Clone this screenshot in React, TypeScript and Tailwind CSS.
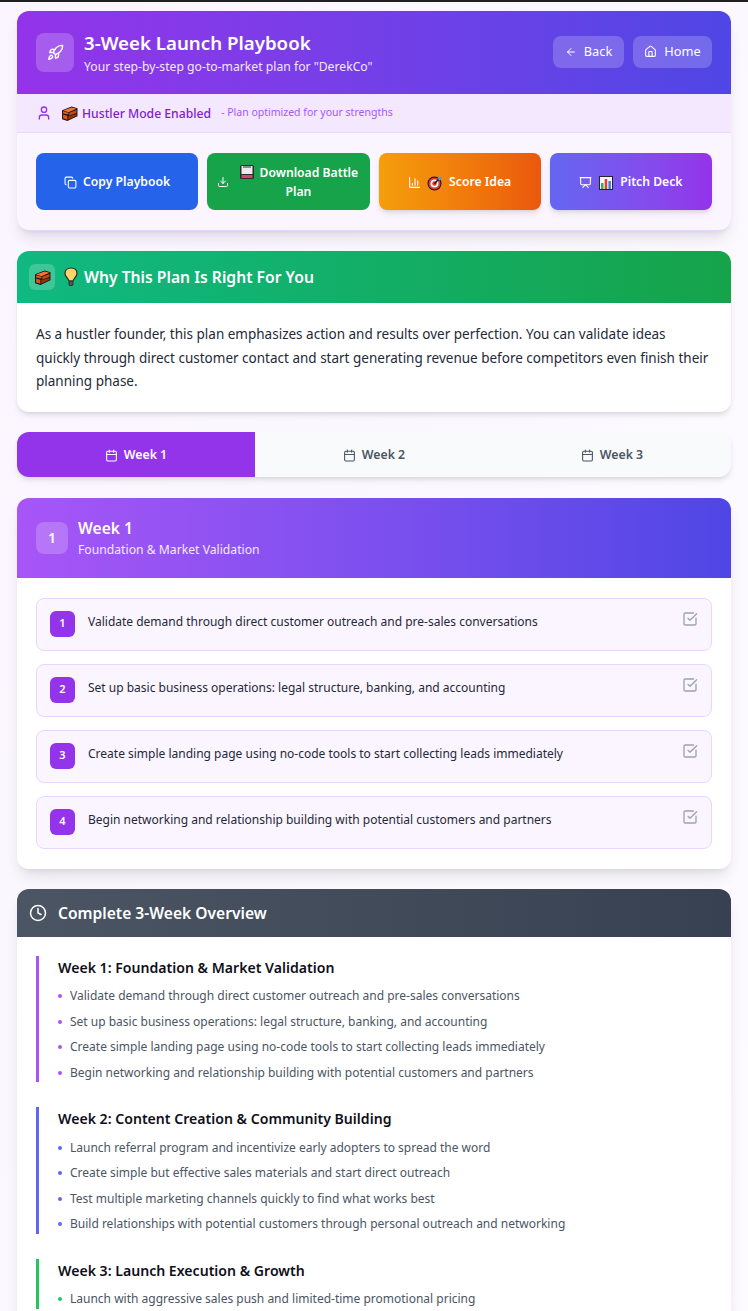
import React from 'react';
import { ArrowLeft, BarChart3, Calendar, CheckSquare, Clock, Copy, Download, Home, Presentation, Rocket, User } from 'lucide-react';

const BrickEmoji = ({ size = 17 }: { size?: number }) => (
  <svg width={size} height={size} viewBox="0 0 16 16" className="shrink-0">
    <path d="M1 5 L10 1.5 L15.5 3 L15.5 10.5 L6 15 L1 13.5 Z" fill="#1f1410" />
    <path d="M2 5.2 L10 2.4 L14.6 3.6 L7 6.8 Z" fill="#f0763a" />
    <path d="M2 5.8 L7 7.4 L7 9 L2 8 Z" fill="#d9601f" />
    <path d="M7.8 7.2 L14.6 4.6 L14.6 7.6 L7.8 9.8 Z" fill="#c24a1a" />
    <path d="M2 9 L6 10 L6 13.8 L2 12.7 Z" fill="#d2591f" />
    <path d="M6.8 10.6 L14.6 8.4 L14.6 10 L6.8 13.8 Z" fill="#8f3513" />
  </svg>
);

const FloppyEmoji = () => (
  <svg width={16} height={16} viewBox="0 0 16 16" className="shrink-0">
    <rect x="1" y="1" width="14" height="14" rx="1.5" fill="#2b2b30" />
    <rect x="2.5" y="2" width="11" height="8" fill="#eceaea" />
    <rect x="4" y="2" width="8" height="2" fill="#8a8a90" />
    <rect x="2.5" y="11" width="11" height="3" fill="#d8436f" />
  </svg>
);

const TargetEmoji = () => (
  <svg width={16} height={16} viewBox="0 0 16 16" className="shrink-0">
    <circle cx="7.5" cy="8.5" r="7" fill="#1c1212" />
    <circle cx="7.5" cy="8.5" r="6" fill="#e23b2e" />
    <circle cx="7.5" cy="8.5" r="4" fill="#f5efe8" />
    <circle cx="7.5" cy="8.5" r="2.2" fill="#d8342a" />
    <path d="M7.5 8.5 L13 3" stroke="#1c1212" strokeWidth="1.4" />
    <path d="M10.5 3.5 L13 1 L15 3 L12.5 5.5 Z" fill="#3fa7e0" />
  </svg>
);

const ChartEmoji = () => (
  <svg width={16} height={16} viewBox="0 0 16 16" className="shrink-0">
    <rect x="1" y="1" width="14" height="14" fill="#25252b" />
    <rect x="2" y="2" width="12" height="12" fill="#f2f4f6" />
    <rect x="3" y="8" width="2.5" height="6" fill="#3db04a" />
    <rect x="6.7" y="4" width="2.5" height="10" fill="#e0403a" />
    <rect x="10.4" y="6" width="2.5" height="8" fill="#3f7fd8" />
  </svg>
);

const BulbEmoji = () => (
  <svg width={16} height={20} viewBox="0 0 16 20" className="shrink-0">
    <path d="M8 1 C3.5 1 2 4 2 6.5 C2 9.5 5 11 6 14 L10 14 C11 11 14 9.5 14 6.5 C14 4 12.5 1 8 1 Z" fill="#fbd56b" stroke="#2a2a20" strokeWidth="1.2" />
    <rect x="6" y="14" width="4" height="4.5" rx="1" fill="#55555a" stroke="#222" strokeWidth="0.8" />
  </svg>
);

const tasks = [
  'Validate demand through direct customer outreach and pre-sales conversations',
  'Set up basic business operations: legal structure, banking, and accounting',
  'Create simple landing page using no-code tools to start collecting leads immediately',
  'Begin networking and relationship building with potential customers and partners',
];

const week2 = [
  'Launch referral program and incentivize early adopters to spread the word',
  'Create simple but effective sales materials and start direct outreach',
  'Test multiple marketing channels quickly to find what works best',
  'Build relationships with potential customers through personal outreach and networking',
];

const OverviewWeek = ({ title, items, border, dot }: { title: string; items: string[]; border: string; dot: string }) => (
  <div className={`border-l-[3px] pl-[19px] pb-[1px] ${border}`}>
    <h4 className="text-[14.1px] leading-[24px] font-semibold text-[#0f0f1a]">{title}</h4>
    <ul className="mt-[8px] flex flex-col gap-[8.5px]">
      {items.map((item) => (
        <li key={item} className="flex items-center h-[17px] text-[12px] text-[#4b5563]">
          <span className={`w-[4px] h-[4px] rounded-full mr-[8px] shrink-0 ${dot}`}></span>
          {item}
        </li>
      ))}
    </ul>
  </div>
);

export default function App() {
  return (
    <div className="h-[1311px] overflow-hidden bg-gradient-to-br from-[#faf5ff] to-[#fdfbff] font-['Noto_Sans',sans-serif] text-[#111827]">
      <div className="h-[2px] bg-[#1f1f1f]"></div>
      <div className="px-[17px] pt-[9px] flex flex-col gap-[20px]">

        {/* Playbook header */}
        <section className="rounded-xl overflow-hidden shadow-lg bg-[#faf5ff] border-b border-[#e9d5ff]">
          <div className="h-[83px] px-[19px] flex items-center justify-between bg-gradient-to-r from-[#9333ea] to-[#4f46e5]">
            <div className="flex items-center gap-[10px]">
              <div className="w-[38px] h-[39px] rounded-lg bg-white/20 flex items-center justify-center">
                <Rocket className="w-[17px] h-[17px] text-white" />
              </div>
              <div>
                <h1 className="text-[18.7px] leading-[26px] font-semibold text-white">3-Week Launch Playbook</h1>
                <p className="mt-[2px] text-[12.2px] leading-[18px] text-[#f3e8ff]">Your step-by-step go-to-market plan for "DerekCo"</p>
              </div>
            </div>
            <div className="flex gap-[9px] mb-[2px]">
              <button className="h-[32px] w-[71px] rounded-lg bg-white/20 text-white text-[12.8px] flex items-center justify-center gap-[7px]">
                <ArrowLeft className="w-[12px] h-[12px]" /> Back
              </button>
              <button className="h-[32px] w-[79px] rounded-lg bg-white/20 text-white text-[12.8px] flex items-center justify-center gap-[7px]">
                <Home className="w-[13px] h-[13px]" /> Home
              </button>
            </div>
          </div>

          <div className="h-[39px] px-[19px] flex items-center bg-[#f3e8ff] border-b border-[#e9d5ff]">
            <User className="w-[16px] h-[16px] text-[#9333ea]" />
            <span className="ml-[9px]"><BrickEmoji /></span>
            <span className="ml-[4px] mt-[2px] text-[12.2px] font-medium text-[#7e22ce]">Hustler Mode Enabled</span>
            <span className="ml-[10px] text-[10.5px] text-[#a855f7]">- Plan optimized for your strengths</span>
          </div>

          <div className="px-[19px] pt-[20px] pb-[20px] grid grid-cols-4 gap-[9px]">
            <button className="h-[57px] pt-[2px] rounded-lg bg-[#2563eb] text-white text-[12.2px] font-semibold flex items-center justify-center gap-[6px]">
              <Copy className="w-[13px] h-[13px]" /> Copy Playbook
            </button>
            <button className="h-[57px] rounded-lg bg-[#16a34a] text-white text-[12.2px] leading-[19px] font-semibold flex items-center justify-center gap-[8px] px-[10px]">
              <Download className="w-[12px] h-[12px] shrink-0" />
              <span className="text-center"><span className="inline-block align-[-3px] mr-[5px]"><FloppyEmoji /></span>Download Battle Plan</span>
            </button>
            <button className="h-[57px] pt-[2px] rounded-lg bg-gradient-to-r from-[#f59e0b] to-[#ea580c] text-white text-[12.2px] font-semibold flex items-center justify-center gap-[6px] shadow-md">
              <BarChart3 className="w-[13px] h-[13px]" />
              <TargetEmoji /> Score Idea
            </button>
            <button className="h-[57px] pt-[2px] rounded-lg bg-gradient-to-r from-[#6366f1] to-[#9333ea] text-white text-[12.2px] font-semibold flex items-center justify-center gap-[6px] shadow-md">
              <Presentation className="w-[13px] h-[13px]" />
              <ChartEmoji /> Pitch Deck
            </button>
          </div>
        </section>

        {/* Why this plan */}
        <section className="rounded-xl overflow-hidden bg-white shadow-md">
          <div className="h-[52px] px-[12px] flex items-center bg-gradient-to-r from-[#10b981] to-[#16a34a]">
            <div className="w-[26px] h-[26px] rounded-md bg-white/20 flex items-center justify-center">
              <BrickEmoji />
            </div>
            <span className="ml-[8px]"><BulbEmoji /></span>
            <h2 className="ml-[5px] mt-[2px] text-[15.7px] font-semibold text-white">Why This Plan Is Right For You</h2>
          </div>
          <p className="px-[19px] pt-[20px] pb-[18px] text-[13.5px] leading-[23.5px] text-[#1f2937]">
            As a hustler founder, this plan emphasizes action and results over perfection. You can validate ideas quickly through direct customer contact and start generating revenue before competitors even finish their planning phase.
          </p>
        </section>

        {/* Week tabs */}
        <div className="h-[45px] rounded-xl overflow-hidden grid grid-cols-3 bg-[#f9fafb] shadow-md">
          <div className="pt-[2px] bg-[#9333ea] text-white text-[12.3px] font-semibold flex items-center justify-center gap-[6px]">
            <Calendar className="w-[13px] h-[13px]" /> Week 1
          </div>
          <div className="pt-[2px] text-[#4b5563] text-[12.3px] font-semibold flex items-center justify-center gap-[6px]">
            <Calendar className="w-[13px] h-[13px]" /> Week 2
          </div>
          <div className="pt-[2px] text-[#4b5563] text-[12.3px] font-semibold flex items-center justify-center gap-[6px]">
            <Calendar className="w-[13px] h-[13px]" /> Week 3
          </div>
        </div>

        {/* Active week */}
        <section className="mt-[1px] rounded-xl overflow-hidden bg-white shadow-lg">
          <div className="h-[80px] px-[19px] flex items-center gap-[10px] bg-gradient-to-r from-[#a855f7] to-[#4f46e5]">
            <div className="w-[32px] h-[32px] rounded-lg bg-white/20 flex items-center justify-center text-white text-[14px] font-semibold">1</div>
            <div className="mt-[2px]">
              <h3 className="text-[15.6px] leading-[22px] font-semibold text-white">Week 1</h3>
              <p className="mt-[1px] text-[12.2px] leading-[20px] text-[#f3e8ff]">Foundation &amp; Market Validation</p>
            </div>
          </div>
          <div className="px-[19px] pt-[20px] pb-[20px] flex flex-col gap-[13px]">
            {tasks.map((task, i) => (
              <div key={task} className="h-[53px] rounded-lg border border-[#e9d5ff] bg-[#faf5ff] pl-[13px] pr-[13px] pt-[12px] flex items-start">
                <div className="w-[25px] h-[26px] rounded-md bg-[#9333ea] text-white text-[11px] font-semibold flex items-center justify-center shrink-0">{i + 1}</div>
                <p className="ml-[13px] mt-[1px] flex-1 text-[12px] leading-[20px] text-[#1f2937]">{task}</p>
                <CheckSquare className="w-[16px] h-[16px] text-[#9ca3af]" />
              </div>
            ))}
          </div>
        </section>

        {/* Overview, runs past the bottom of the window */}
        <section className="rounded-xl overflow-hidden bg-white shadow-lg">
          <div className="h-[48px] px-[12px] flex items-center gap-[11px] bg-gradient-to-r from-[#4b5563] to-[#374151]">
            <Clock className="w-[18px] h-[18px] text-white" />
            <h2 className="mt-[2px] text-[15.6px] font-semibold text-white">Complete 3-Week Overview</h2>
          </div>
          <div className="px-[19px] pt-[19px] pb-[40px] flex flex-col gap-[25px]">
            <OverviewWeek title="Week 1: Foundation & Market Validation" items={tasks} border="border-[#a855f7]" dot="bg-[#a855f7]" />
            <OverviewWeek title="Week 2: Content Creation & Community Building" items={week2} border="border-[#6366f1]" dot="bg-[#6366f1]" />
            <OverviewWeek title="Week 3: Launch Execution & Growth" items={['Launch with aggressive sales push and limited-time promotional pricing']} border="border-[#22c55e]" dot="bg-[#22c55e]" />
          </div>
        </section>

      </div>
    </div>
  );
}
